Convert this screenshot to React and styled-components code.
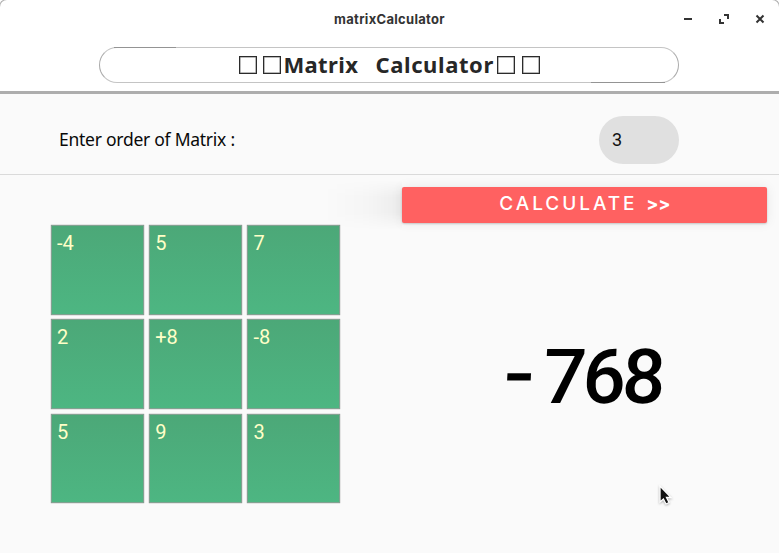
import React from "react";
import styled, { createGlobalStyle } from "styled-components";

const GlobalStyle = createGlobalStyle`
  * { box-sizing: border-box; }
  body { margin: 0; background: #fff; }
`;

const Window = styled.div`
  position: relative;
  width: 779px;
  height: 553px;
  overflow: hidden;
  background: #fafafa;
  display: flex;
  flex-direction: column;
`;

const Corner = styled.i`
  position: absolute;
  top: -1px;
  ${(p) => p.$side}: -1px;
  width: 8px;
  height: 8px;
  border-top: 1px solid #b4b4b4;
  border-${(p) => p.$side}: 1px solid #b4b4b4;
  border-top-${(p) => p.$side}-radius: 8px;
`;

const Header = styled.header`
  height: 94px;
  background: #fff;
  border-bottom: 3px solid #adadad;
  display: flex;
  flex-direction: column;
  align-items: center;
`;

const TitleBar = styled.div`
  width: 100%;
  height: 47px;
  display: grid;
  grid-template-columns: 1fr auto 1fr;
  align-items: start;
`;

const WindowTitle = styled.div`
  grid-column: 2;
  padding-top: 11px;
  font: 700 13px/17px Inter, sans-serif;
  letter-spacing: 0.3px;
  color: #333;
`;

const WindowControls = styled.div`
  display: flex;
  justify-content: flex-end;
  gap: 20px;
  padding: 11px 11px 0 0;
`;

const ControlIcon = styled.svg`
  display: block;
  width: 16px;
  height: 16px;
  fill: none;
  stroke: #333;
  stroke-width: 2;
`;

const TitlePill = styled.h1`
  position: relative;
  width: 580px;
  height: 36px;
  margin: 0 1px 0 0;
  border: 1px solid #c4c4c4;
  border-left-color: #aaa;
  border-right-color: #aaa;
  border-radius: 18px;
  display: flex;
  justify-content: center;
  align-items: center;
  color: #272727;
  font: 700 22px/30px "Noto Sans", sans-serif;

  &::before, &::after {
    content: "";
    position: absolute;
    height: 1px;
    background: #949494;
  }
  &::before { top: -1px; left: 14px; width: 62px; }
  &::after { bottom: -1px; right: 13px; width: 74px; }
`;

const MissingGlyph = styled.i`
  width: 18px;
  height: 18px;
  margin-bottom: 1px;
  margin-right: ${(p) => p.$after || 0}px;
  border: 1px solid #2b2b2b;
  box-shadow: inset 0 0 0 0.5px #777;
`;

const TitleWord = styled.span`
  width: ${(p) => p.$width}px;
  padding-bottom: 2px;
  white-space: nowrap;
  letter-spacing: ${(p) => p.$spacing}px;
`;

const OrderRow = styled.section`
  height: 81px;
  padding: 22px 100px 0 59px;
  border-bottom: 1px solid #dadada;
  display: flex;
  justify-content: space-between;
`;

const OrderLabel = styled.label`
  padding-top: 11px;
  font: 400 17.5px/24px "Noto Sans", sans-serif;
  letter-spacing: -0.26px;
  color: #090909;
`;

const OrderField = styled.div`
  width: 80px;
  height: 48px;
  padding-left: 13px;
  border-radius: 24px;
  background: #e0e0e0;
  color: #111;
  font: 400 18px/48px Roboto, sans-serif;
`;

const Workspace = styled.main`
  flex: 1;
  display: flex;
  justify-content: space-between;
  padding: 12px 12px 0 51px;
`;

const Matrix = styled.div`
  display: grid;
  grid-template-columns: repeat(3, 93px);
  grid-template-rows: repeat(3, 89.5px);
  gap: 4.8px 5.2px;
  align-content: start;
  padding-top: 38px;
`;

const Cell = styled.div`
  padding: 4px 0 0 5px;
  border: 1px solid #82a191;
  box-shadow: 0 0 1px #777;
  background: linear-gradient(#4ca878, #4db682);
  color: #ffffc8;
  font: 400 20px/26px Roboto, sans-serif;
`;

const ResultPane = styled.div`
  width: 365.5px;
  display: flex;
  flex-direction: column;
  align-items: center;
`;

const CalculateButton = styled.button`
  position: relative;
  width: 100%;
  height: 36px;
  padding: 0 0 3px 1px;
  border: 0;
  border-radius: 2px;
  background: #ff6161;
  box-shadow: 0 1px 2px rgba(0, 0, 0, 0.18), 0 0 12px rgba(0, 0, 0, 0.08);
  color: #fff;
  display: flex;
  justify-content: center;
  align-items: center;
  gap: 10px;
  font: 500 19px/28px Inter, sans-serif;

  &::before {
    content: "";
    position: absolute;
    right: 100%;
    top: -7px;
    width: 78px;
    height: 50px;
    background: linear-gradient(90deg, transparent, rgba(0, 0, 0, 0.02) 55%, rgba(0, 0, 0, 0.055));
    mask-image: linear-gradient(transparent, #000 35%, #000 65%, transparent);
  }
`;

const ButtonWord = styled.span`
  width: 137px;
  text-align: left;
  white-space: nowrap;
  letter-spacing: 2.95px;
`;

const ButtonArrows = styled.span`
  width: 24px;
  text-align: left;
  font-weight: 700;
  font-size: 18px;
  letter-spacing: -0.3px;
`;

const Result = styled.output`
  margin-top: 105px;
  display: flex;
  font: 500 76px/98px Roboto, sans-serif;
  letter-spacing: -3.6px;
  color: #000;
  transform: skewX(-3deg);
`;

const Sign = styled.span`
  margin-right: 15px;
  padding-bottom: 4px;
  line-height: 92px;
  transform: scaleX(1.2);
`;

const Pointer = styled.svg`
  position: absolute;
  left: 657px;
  top: 484px;
  width: 16px;
  height: 24px;
  filter: drop-shadow(0 1px 1px rgba(0, 0, 0, 0.3));
`;

const entries = ["-4", "5", "7", "2", "+8", "-8", "5", "9", "3"];

export default function App() {
  return (
    <>
      <GlobalStyle />
      <Window>
        <Header>
          <TitleBar>
            <span />
            <WindowTitle>matrixCalculator</WindowTitle>
            <WindowControls>
              <ControlIcon viewBox="0 0 16 16"><path d="M4 8H12" /></ControlIcon>
              <ControlIcon viewBox="0 0 16 16"><path d="M8 4H12V8M4 8V12H8" /></ControlIcon>
              <ControlIcon viewBox="0 0 16 16"><path d="M4.5 4.5L11.5 11.5M11.5 4.5L4.5 11.5" /></ControlIcon>
            </WindowControls>
          </TitleBar>
          <TitlePill>
            <MissingGlyph $after={6} />
            <MissingGlyph $after={3} />
            <TitleWord $width={92} $spacing={0.35}>Matrix</TitleWord>
            <TitleWord $width={121} $spacing={0.6}>Calculator</TitleWord>
            <MissingGlyph $after={7} />
            <MissingGlyph />
          </TitlePill>
        </Header>
        <OrderRow>
          <OrderLabel>Enter order of Matrix :</OrderLabel>
          <OrderField>3</OrderField>
        </OrderRow>
        <Workspace>
          <Matrix>
            {entries.map((value, index) => <Cell key={index}>{value}</Cell>)}
          </Matrix>
          <ResultPane>
            <CalculateButton>
              <ButtonWord>CALCULATE</ButtonWord>
              <ButtonArrows>&gt;&gt;</ButtonArrows>
            </CalculateButton>
            <Result><Sign>-</Sign>768</Result>
          </ResultPane>
        </Workspace>
        <Pointer viewBox="0 0 16 24">
          <path d="M3 2V18L6.4 15L9 20L12 18.5L9.5 13.5H14Z" fill="#111" stroke="#fff" strokeWidth="1.3" />
        </Pointer>
        <Corner $side="left" />
        <Corner $side="right" />
      </Window>
    </>
  );
}
